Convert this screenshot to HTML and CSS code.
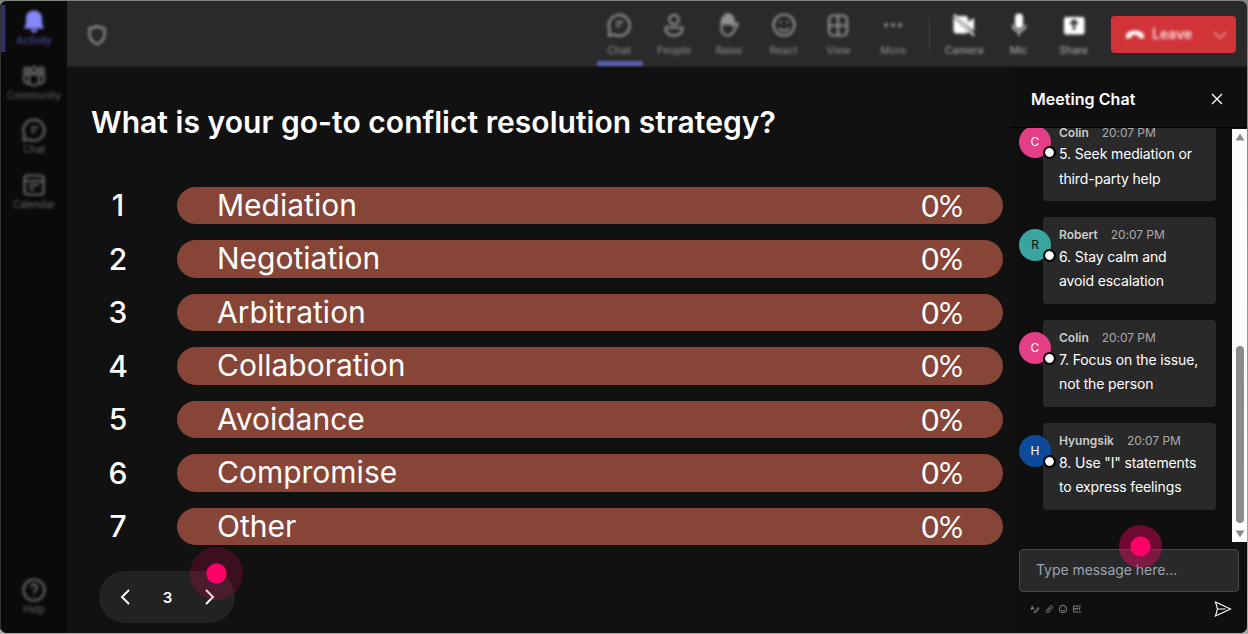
FILE: index.html
```
<!DOCTYPE html>
<html lang="en">
<head>
    <meta charset="UTF-8">
    <meta name="viewport" content="width=device-width, initial-scale=1.0">
    <title>Meeting</title>
    <link rel="stylesheet" href="styles.css">
</head>
<body>
    <div class="window">
        <nav class="sidebar">
            <div class="nav-item active">
                <svg class="icon filled" viewBox="0 0 24 24"><path d="M12 1.500c-4.800 0-8 3.600-8 8v5L2 19.500h20l-2-5v-5c0-4.400-3.200-8-8-8zM8.500 20.500a3.500 3 0 0 0 7 0z"/></svg>
                <span>Activity</span>
            </div>
            <div class="nav-item">
                <svg class="icon" viewBox="0 0 24 24"><circle cx="12" cy="6" r="3"/><circle cx="4.500" cy="6" r="2.300"/><circle cx="19.500" cy="6" r="2.300"/><path d="M7 10.500h10v6a5 5 0 0 1-10 0zM7 10.500H2v5a4 4 0 0 0 5 4M17 10.500h5v5a4 4 0 0 1-5 4"/></svg>
                <span>Community</span>
            </div>
            <div class="nav-item">
                <svg class="icon" viewBox="0 0 24 24"><path d="M1.500 22.500l1-5.500A10.500 10.500 0 1 1 7 21.500zM9 9.500h7M9 13.500h4"/></svg>
                <span>Chat</span>
            </div>
            <div class="nav-item">
                <svg class="icon" viewBox="0 0 24 24"><rect x="2.500" y="2.500" width="19" height="19" rx="3"/><path d="M3 8h18M7 12h10M7 16h5"/></svg>
                <span>Calendar</span>
            </div>
            <div class="nav-item help">
                <svg class="icon" viewBox="0 0 24 24"><circle cx="12" cy="12" r="10.500"/><path d="M9 9.500a3 3 0 1 1 4.500 2.600c-1 .6-1.500 1-1.500 2.400M12 17v1.200"/></svg>
                <span>Help</span>
            </div>
        </nav>

        <div class="content">
            <header class="toolbar">
                <svg class="icon shield" viewBox="0 0 24 24"><path d="M12 3c2.500 1.800 5 2.300 7.500 2.300V11c0 5-3 8.200-7.500 10.300C7.500 19.200 4.500 16 4.500 11V5.300C7 5.300 9.500 4.800 12 3z"/></svg>
                <div class="tools">
                    <div class="tool selected">
                        <svg class="icon" viewBox="0 0 24 24"><path d="M2 22.500l.8-5.500A10.500 10.500 0 1 1 7 21.500zM9 9h7M9 13h4"/></svg>
                        <span>Chat</span>
                    </div>
                    <div class="tool">
                        <svg class="icon" viewBox="0 0 24 24"><circle cx="12" cy="6.500" r="4.700"/><path d="M3.500 14.500h17v2c0 3.500-4 6-8.500 6s-8.500-2.500-8.500-6z"/></svg>
                        <span>People</span>
                    </div>
                    <div class="tool">
                        <svg class="icon" viewBox="0 0 24 24"><path d="M4.500 10v6c0 4 2.500 6.500 6 6.500 2.500 0 4.500-1 6-4l4-6.500c.8-1.500-.8-2.500-2-1.500L16 12.500V10"/><path class="solid" d="M5 11V6l2-2 2-2.500 3-.5 3 2 1.500 3V11z"/></svg>
                        <span>Raise</span>
                    </div>
                    <div class="tool">
                        <svg class="icon" viewBox="0 0 24 24"><circle cx="12" cy="12" r="10.500"/><path d="M7 15.500c2.500 3.300 7.500 3.300 10 0M8.500 8v2M15.500 8v2"/></svg>
                        <span>React</span>
                    </div>
                    <div class="tool">
                        <svg class="icon" viewBox="0 0 24 24"><rect x="3" y="2.500" width="18" height="20" rx="4"/><path d="M12 3v19M3 12.500h18"/></svg>
                        <span>View</span>
                    </div>
                    <div class="tool">
                        <svg class="icon filled" viewBox="0 0 24 24"><circle cx="5" cy="12" r="2"/><circle cx="12" cy="12" r="2"/><circle cx="19" cy="12" r="2"/></svg>
                        <span>More</span>
                    </div>
                </div>
                <div class="tools devices">
                    <div class="tool">
                        <svg class="icon filled" viewBox="0 0 24 24"><path d="M5 3h8a3 3 0 0 1 3 3v3l6-4v13l-4-3-13-12zM1.500 4l15 15a3 3 0 0 1-2 1.500h-10a3 3 0 0 1-3-3z"/><path class="slash" d="M2 1.500l20 21"/></svg>
                        <span>Camera</span>
                    </div>
                    <div class="tool">
                        <svg class="icon filled" viewBox="0 0 24 24"><rect x="8" y="0.500" width="8" height="15" rx="4"/><path class="slash thin" d="M5.500 11.500c0 9 13 9 13 0M12 18.500V23"/></svg>
                        <span>Mic</span>
                    </div>
                    <div class="tool">
                        <svg class="icon filled" viewBox="0 0 24 24"><rect x="2" y="4" width="20.500" height="17.500" rx="2"/><path class="cut" d="M12 17V8M8.500 11L12 7.500l3.500 3.500"/></svg>
                        <span>Share</span>
                    </div>
                </div>
                <div class="leave">
                    <svg class="icon filled phone" viewBox="0 0 24 24"><path d="M12 6.500c6 0 10.500 2.500 11 7 .2 2-.5 3-2 2.800l-3.500-.6c-1.200-.3-1.700-1-1.700-3-2.500-.8-5-.8-7.600 0 0 2-.5 2.700-1.700 3l-3.500.6c-1.500.2-2.200-.8-2-2.800.5-4.500 5-7 11-7z"/></svg>
                    <span>Leave</span>
                    <svg class="icon chevron" viewBox="0 0 24 24"><path d="M3 8l9 9 9-9"/></svg>
                </div>
            </header>

            <div class="meeting">
                <main class="poll">
                    <h1>What is your go-to conflict resolution strategy?</h1>
                    <ol class="options">
                        <li><b>1</b><div class="bar"><span>Mediation</span><span class="percent">0%</span></div></li>
                        <li><b>2</b><div class="bar"><span>Negotiation</span><span class="percent">0%</span></div></li>
                        <li><b>3</b><div class="bar"><span>Arbitration</span><span class="percent">0%</span></div></li>
                        <li><b>4</b><div class="bar"><span>Collaboration</span><span class="percent">0%</span></div></li>
                        <li><b>5</b><div class="bar"><span>Avoidance</span><span class="percent">0%</span></div></li>
                        <li><b>6</b><div class="bar"><span>Compromise</span><span class="percent">0%</span></div></li>
                        <li><b>7</b><div class="bar"><span>Other</span><span class="percent">0%</span></div></li>
                    </ol>
                    <div class="pager">
                        <svg viewBox="0 0 10 16"><path d="M9 1L2 8l7 7"/></svg>
                        <span>3</span>
                        <svg viewBox="0 0 10 16"><path d="M1 1l7 7-7 7"/></svg>
                        <i class="hotspot"></i>
                    </div>
                </main>

                <aside class="chat">
                    <div class="chat-header">
                        <h2>Meeting Chat</h2>
                        <svg class="close" viewBox="0 0 12 12"><path d="M1 1l10 10M11 1L1 11"/></svg>
                    </div>
                    <div class="chat-body">
                        <div class="messages">
                            <div class="message">
                                <div class="avatar pink">C</div>
                                <div class="bubble">
                                    <div class="meta"><b>Colin</b><time>20:07 PM</time></div>
                                    <p>5. Seek mediation or<br>third-party help</p>
                                </div>
                            </div>
                            <div class="message">
                                <div class="avatar teal">R</div>
                                <div class="bubble">
                                    <div class="meta"><b>Robert</b><time>20:07 PM</time></div>
                                    <p>6. Stay calm and<br>avoid escalation</p>
                                </div>
                            </div>
                            <div class="message">
                                <div class="avatar pink">C</div>
                                <div class="bubble">
                                    <div class="meta"><b>Colin</b><time>20:07 PM</time></div>
                                    <p>7. Focus on the issue,<br>not the person</p>
                                </div>
                            </div>
                            <div class="message">
                                <div class="avatar blue">H</div>
                                <div class="bubble">
                                    <div class="meta"><b>Hyungsik</b><time>20:07 PM</time></div>
                                    <p>8. Use "I" statements<br>to express feelings</p>
                                </div>
                            </div>
                        </div>
                        <div class="scrollbar">
                            <svg viewBox="0 0 10 8"><path d="M5 0.500L9.500 7.500h-9z"/></svg>
                            <div class="thumb"></div>
                            <svg viewBox="0 0 10 8"><path d="M5 7.500L9.500 0.500h-9z"/></svg>
                        </div>
                    </div>
                    <div class="compose">
                        <div class="input">Type message here...<i class="hotspot small"></i></div>
                        <div class="actions">
                            <svg viewBox="0 0 10 10"><path d="M1 6l1.300-4L4 6M1.800 4.500h1.500M4 8.500L8.500 3M4 8.500l2.500-.5L9 4"/></svg>
                            <svg viewBox="0 0 10 10"><path d="M2.500 6.500l3.500-4c1.500-1.500 3.500 0 2 1.800L5 7.800C3.500 9.300 1 8 2.500 6.500zM4 6.500l2.500-2.800"/></svg>
                            <svg viewBox="0 0 10 10"><circle cx="5" cy="5" r="3.800"/><path d="M3 5.800c1 1.500 3 1.500 4 0M3.500 3.500v.8M6.500 3.500v.8"/></svg>
                            <svg viewBox="0 0 10 10"><path d="M9 2H1.500v6H9M3 6V4l1.200 1L5.400 4v2M7.500 4v2M6.500 4h2"/></svg>
                            <svg class="send" viewBox="0 0 18 16"><path d="M1.500 1L16.500 8l-15 7L3.500 8zM3.500 8h8"/></svg>
                        </div>
                    </div>
                </aside>
            </div>
        </div>
    </div>
</body>
</html>
```
FILE: styles.css
```
* {
    box-sizing: border-box;
}
body {
    margin: 0;
    padding: 1px 1px 1px 0;
    height: 634px;
    overflow: hidden;
    background: linear-gradient(#808580, #aaa);
    font-family: Inter, "Liberation Sans", sans-serif;
    color: #fff;
}
h1, h2, p, ol {
    margin: 0;
    padding: 0;
}
.window {
    display: flex;
    height: 632px;
    border-radius: 7px;
    overflow: hidden;
    background: #111;
}

/* sidebar */
.sidebar {
    display: flex;
    flex-direction: column;
    width: 67px;
    background: #0a0a0a;
    border-left: 1px solid #333;
}
.nav-item {
    display: flex;
    flex-direction: column;
    align-items: center;
    height: 54.7px;
    padding-top: 8px;
    font-size: 10px;
    line-height: 14px;
    color: #686868;
}
.nav-item > * {
    filter: blur(1.4px);
}
.nav-item.active {
    background: linear-gradient(90deg, #30306b 4px, transparent 5px) 0 4px / 100% 47px no-repeat;
    color: #5558bb;
}
.nav-item.active .icon {
    color: #8488f8;
}
.nav-item.help {
    margin: auto 0 8px;
}
.icon {
    width: 24px;
    height: 24px;
    fill: none;
    stroke: currentColor;
    stroke-width: 2.2;
}
.icon.filled {
    fill: currentColor;
    stroke: none;
}
.icon .solid {
    fill: currentColor;
}
.icon .slash {
    fill: none;
    stroke: currentColor;
    stroke-width: 2;
}
.icon .thin {
    stroke-width: 1.3;
}
.icon .cut {
    fill: none;
    stroke: #333;
    stroke-width: 2.5;
}

/* toolbar */
.content {
    display: flex;
    flex-direction: column;
    flex: 1;
}
.toolbar {
    display: flex;
    align-items: center;
    height: 67px;
    padding: 0 11px 0 18px;
    background: linear-gradient(#2a2a2a 64px, #111 67px);
}
.shield {
    width: 24px;
    color: #909090;
    filter: blur(1.4px);
}
.tools {
    display: flex;
    height: 67px;
    margin-left: auto;
}
.tool {
    position: relative;
    display: flex;
    flex-direction: column;
    align-items: center;
    width: 54.8px;
    padding-top: 12px;
    gap: 6px;
    font-size: 10.5px;
    line-height: 15px;
    color: #929292;
}
.tool > *,
.leave > * {
    filter: blur(1.4px);
}
.tool.selected::after {
    content: "";
    position: absolute;
    left: 5px;
    top: 60px;
    width: 46px;
    height: 5px;
    border-radius: 2px;
    background: #5b5fb0;
    filter: blur(1px);
}
.devices {
    margin-left: 8px;
    padding-left: 8px;
    background: linear-gradient(#3c3c3c, #3c3c3c) 0 16px / 1px 36px no-repeat;
}
.devices .tool {
    color: #b4b4b4;
}
.devices .icon {
    color: #fff;
}
.leave {
    display: flex;
    align-items: center;
    width: 125px;
    height: 37px;
    margin-left: 10px;
    padding: 0 8px 0 14px;
    border-radius: 4px;
    background: #d13438;
    font-size: 14px;
    line-height: 18px;
    font-weight: 600;
    filter: blur(0.7px);
}
.leave span {
    margin: -2px 0 0 7px;
    color: #f8dcdd;
}
.leave .phone {
    width: 20px;
}
.leave .chevron {
    width: 16px;
    margin-left: auto;
    color: #eba1a3;
}

/* poll */
.meeting {
    display: flex;
    flex: 1;
}
.poll {
    display: flex;
    flex-direction: column;
    align-items: flex-start;
    width: 944px;
    padding: 35px 8px 0 24px;
    background: #111;
}
h1 {
    font-size: 30px;
    line-height: 38px;
    font-weight: 600;
    letter-spacing: 0.04px;
    white-space: nowrap;
}
.options {
    display: flex;
    flex-direction: column;
    gap: 16px;
    width: 100%;
    margin-top: 46px;
    padding-left: 1px;
    list-style: none;
}
.options li {
    display: flex;
    align-items: center;
    height: 37.45px;
    font-size: 30px;
    line-height: 36.500px;
}
.options b {
    width: 52px;
    margin-right: 33px;
    font-weight: 500;
    text-align: center;
}
.bar {
    display: flex;
    flex: 1;
    justify-content: space-between;
    height: 100%;
    padding: 0 40px;
    border-radius: 19px;
    background: #864537;
}
.percent {
    font-family: Lato, Inter, sans-serif;
}
.pager {
    position: relative;
    display: flex;
    align-items: center;
    justify-content: space-between;
    width: 136px;
    height: 52px;
    margin: 26px 0 0 8px;
    padding: 0 20px 0 21px;
    border-radius: 26px;
    background: #222;
    font-size: 15px;
    font-weight: 600;
}
.pager svg {
    width: 10px;
    height: 16px;
    fill: none;
    stroke: #fff;
    stroke-width: 2;
}
.hotspot {
    position: absolute;
    left: 91px;
    top: -24.5px;
    width: 53px;
    height: 53px;
    border-radius: 50%;
    background: radial-gradient(circle, #ff0066 9.5px, rgba(255, 0, 102, 0.18) 10.5px);
}
.hotspot.small {
    left: 99px;
    top: -25px;
    width: 43px;
    height: 43px;
    background: radial-gradient(circle, #ff0066 9.5px, rgba(255, 0, 102, 0.4) 10.5px);
}

/* chat */
.chat {
    display: flex;
    flex-direction: column;
    flex: 1;
    background: #0f0f0f;
}
.chat-header {
    display: flex;
    align-items: center;
    justify-content: space-between;
    height: 60px;
    padding: 2px 24px 0 20px;
    border-bottom: 1px solid #000;
}
.chat-header h2 {
    font-size: 16px;
    line-height: 20px;
    font-weight: 600;
    letter-spacing: 0.05px;
}
.close {
    width: 12px;
    height: 12px;
    fill: none;
    stroke: #fff;
    stroke-width: 1.4;
}
.chat-body {
    display: flex;
    justify-content: space-between;
    height: 414px;
    overflow: hidden;
}
.messages {
    display: flex;
    flex-direction: column;
    justify-content: flex-end;
    gap: 16px;
    padding: 0 0 32px 8px;
}
.message {
    display: flex;
    flex-shrink: 0;
    height: 87px;
}
.message:first-child .bubble {
    padding-top: 11px;
}
.message:first-child p {
    margin-top: 1px;
    line-height: 24.8px;
}
.avatar {
    position: relative;
    z-index: 1;
    width: 32px;
    height: 32px;
    margin: 11.5px -8px 0 0;
    border-radius: 50%;
    font-size: 12px;
    line-height: 32px;
    text-align: center;
}
.avatar::after {
    content: "";
    position: absolute;
    right: -4px;
    bottom: 0;
    width: 12px;
    height: 12px;
    border: 2px solid #000;
    border-radius: 50%;
    background: #fff;
    background-clip: padding-box;
    box-sizing: border-box;
}
.pink {
    background: #e43f86;
}
.teal {
    background: #38a59f;
    color: #111;
}
.blue {
    background: #0e4a9a;
}
.bubble {
    width: 173px;
    padding: 10px 0 0 16px;
    border-radius: 4px;
    background: #292929;
}
.meta {
    display: flex;
    gap: 13px;
    font-size: 12px;
    line-height: 16px;
    color: #ccc;
}
.meta b {
    font-weight: 600;
}
.meta time {
    color: #aaa;
    letter-spacing: -0.05px;
}
.bubble p {
    margin-top: 2px;
    font-size: 14px;
    line-height: 24.3px;
    letter-spacing: -0.13px;
    white-space: nowrap;
}
.scrollbar {
    display: flex;
    flex-direction: column;
    align-items: center;
    justify-content: space-between;
    width: 15px;
    height: 413px;
    margin-top: 1px;
    padding: 4px 0;
    background: #fcfcfc;
}
.scrollbar svg {
    width: 10px;
    height: 8px;
    fill: #8b8b8b;
}
.thumb {
    width: 8px;
    height: 177px;
    margin: auto 0 7px;
    border-radius: 4px;
    background: #8b8b8b;
}
.compose {
    padding: 7px 8px 0;
}
.input {
    position: relative;
    height: 43px;
    padding-left: 16px;
    border: 1px solid #484848;
    border-radius: 4px;
    background: #292929;
    font-size: 14px;
    line-height: 40px;
    letter-spacing: -0.05px;
    color: #9ca3af;
}
.actions {
    display: flex;
    align-items: center;
    gap: 4.3px;
    height: 16px;
    margin-top: 9px;
    padding: 0 7px 0 10.5px;
}
.actions svg {
    width: 10px;
    height: 10px;
    fill: none;
    stroke: #999;
    stroke-width: 0.8;
}
.actions .send {
    width: 18px;
    height: 16px;
    margin-left: auto;
    stroke: #fff;
    stroke-width: 1.1;
}
.avatar::after {
    right: -5px;
    bottom: -1px;
    width: 13px;
    height: 13px;
}
```
